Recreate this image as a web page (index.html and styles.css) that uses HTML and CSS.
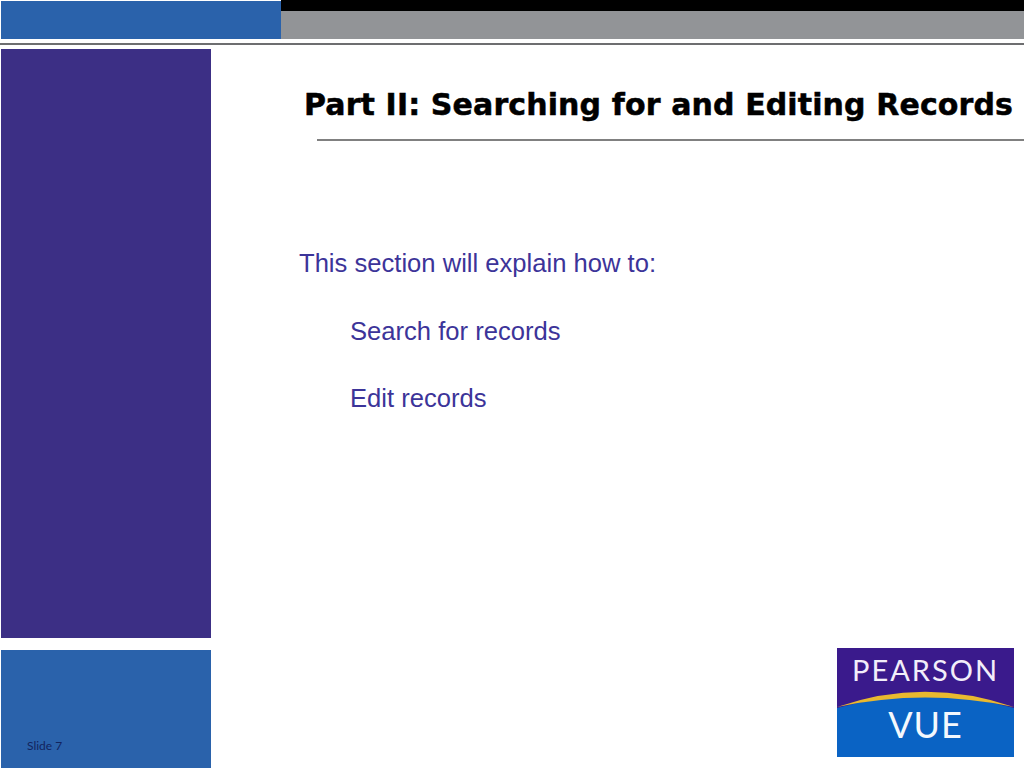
FILE: index.html
```html
<!DOCTYPE html>
<html lang="en">
<head>
<meta charset="utf-8">
<title>Part II: Searching for and Editing Records</title>
<link rel="stylesheet" href="styles.css">
</head>
<body>
<div class="slide">
  <header class="top">
    <div class="top-blue"></div>
    <div class="top-right">
      <div class="top-black"></div>
      <div class="top-grey"></div>
    </div>
  </header>
  <div class="rule"></div>
  <div class="main">
    <aside class="side">
      <div class="side-purple"></div>
      <div class="side-blue"><span class="slide-no">Slide 7</span></div>
    </aside>
    <div class="content">
      <h1 class="title">Part II: Searching for and Editing Records</h1>
      <div class="title-rule"></div>
      <p class="intro">This section will explain how to:</p>
      <p class="item">Search for records</p>
      <p class="item">Edit records</p>
      <div class="logo">
        <div class="logo-top"><span class="pearson">PEARSON</span></div>
        <div class="logo-bottom"><span class="vue">VUE</span></div>
        <svg class="logo-arc" viewBox="0 0 177 24" aria-hidden="true">
          <path d="M0 20 Q88 -4 177 20 L177 24 L0 24 Z" fill="#0a63c4"/>
          <path d="M0 19 Q88 -11.500 177 19 Q88 0 0 19 Z" fill="#e9b92f"/>
        </svg>
      </div>
    </div>
  </div>
</div>
</body>
</html>
```
FILE: styles.css
```css
html, body {
  margin: 0;
  padding: 0;
  background: #fff;
}
.slide {
  width: 1024px;
  height: 768px;
  overflow: hidden;
  display: flex;
  flex-direction: column;
  font-family: "Liberation Sans", Arial, sans-serif;
}
.top {
  display: flex;
  height: 39px;
  padding-left: 1px;
  flex: none;
}
.top-blue {
  width: 280px;
  margin-top: 1px;
  background: #2a62ab;
}
.top-right {
  flex: 1;
  display: flex;
  flex-direction: column;
}
.top-black {
  height: 11px;
  background: #000;
}
.top-grey {
  flex: 1;
  background: #929497;
}
.rule {
  height: 2px;
  margin-top: 4px;
  background: #6d6e70;
  flex: none;
}
.main {
  flex: 1;
  display: flex;
  padding-top: 4px;
  padding-left: 1px;
  min-height: 0;
}
.side {
  width: 210px;
  flex: none;
  display: flex;
  flex-direction: column;
  gap: 12px;
}
.side-purple {
  height: 589px;
  background: #3c2f85;
  flex: none;
}
.side-blue {
  flex: 1;
  background: #2a62ab;
  display: flex;
  align-items: flex-end;
  padding: 0 0 15px 26px;
}
.slide-no {
  font-family: "Lato", sans-serif;
  font-size: 12px;
  line-height: 15px;
  color: #12245e;
}
.content {
  flex: 1;
  display: flex;
  flex-direction: column;
  min-width: 0;
}
.title {
  margin: 38px 0 0 93px;
  font-family: "DejaVu Sans", "Liberation Sans", sans-serif;
  font-size: 30px;
  line-height: 36px;
  font-weight: 700;
  letter-spacing: 0.12px;
  white-space: nowrap;
  color: #000;
  -webkit-text-stroke: 0.5px #000;
}
.title-rule {
  height: 2px;
  margin: 16px 0 0 106px;
  background: #808080;
}
.intro, .item {
  margin: 0;
  font-size: 25.6px;
  line-height: 29px;
  color: #3c3499;
}
.intro {
  margin: 108px 0 0 88px;
}
.item {
  margin: 38.5px 0 0 139px;
}
.logo {
  position: absolute;
  left: 837px;
  top: 648px;
  width: 177px;
  height: 109px;
  display: flex;
  flex-direction: column;
}
.logo-top {
  height: 60px;
  background: #3a1a8c;
  display: flex;
  justify-content: center;
  padding-top: 5px;
  box-sizing: border-box;
}
.pearson {
  font-family: "Lato", sans-serif;
  font-size: 29px;
  line-height: 34px;
  letter-spacing: 2px;
  color: #f2eefa;
}
.logo-bottom {
  flex: 1;
  background: #0a63c4;
  display: flex;
  justify-content: center;
}
.vue {
  font-family: "Lato", sans-serif;
  font-size: 36px;
  line-height: 32px;
  letter-spacing: 1px;
  color: #f4f8fd;
}
.logo-arc {
  position: absolute;
  left: 0;
  top: 40px;
  width: 177px;
  height: 24px;
}
```
